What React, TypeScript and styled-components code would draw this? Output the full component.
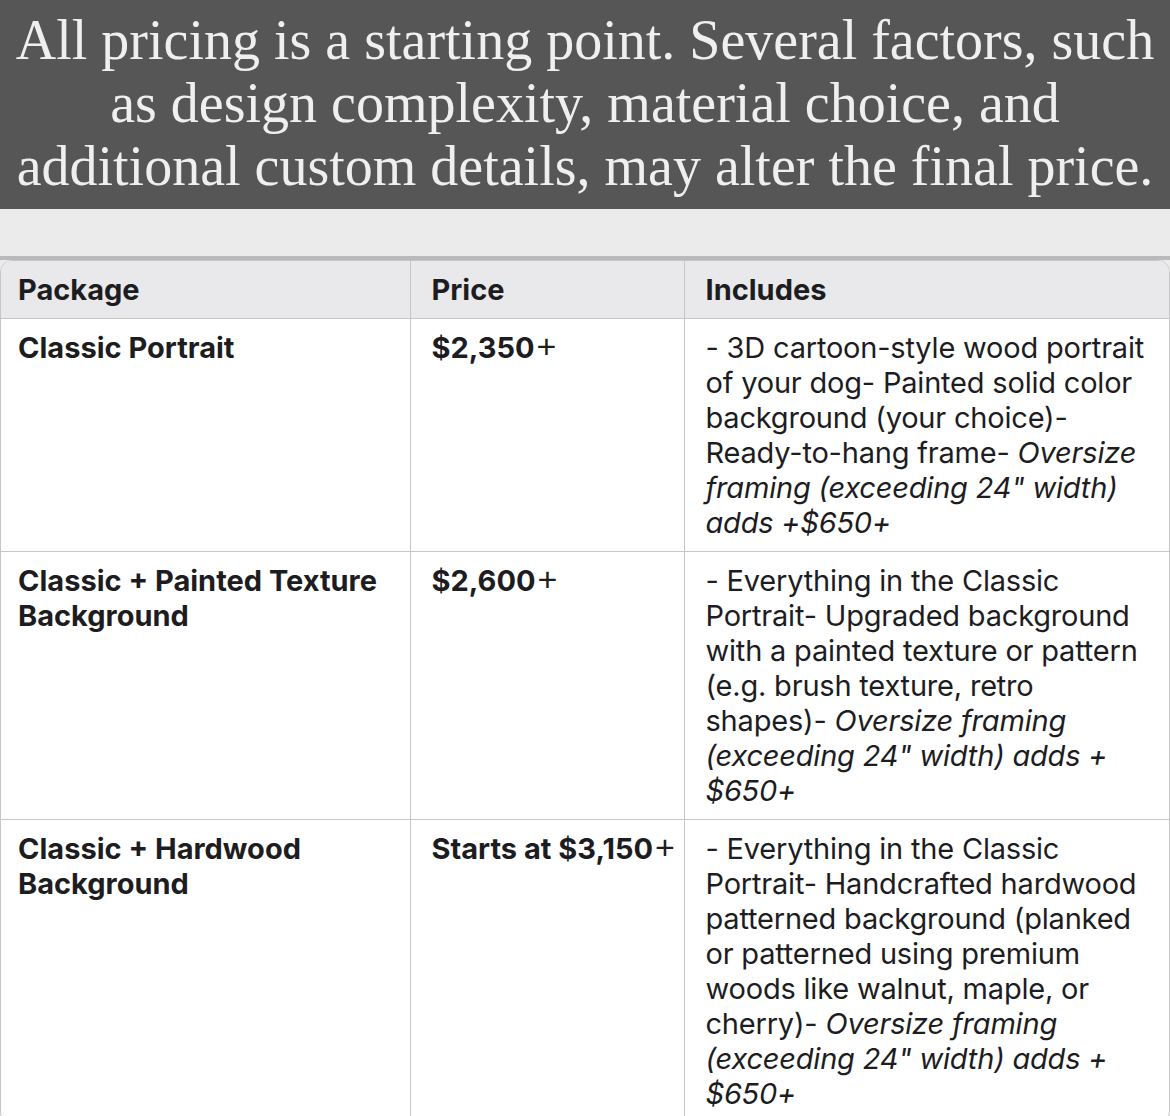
import React from "react";
import styled, { createGlobalStyle } from "styled-components";

const GlobalStyle = createGlobalStyle`
  html, body {
    margin: 0;
    padding: 0;
    overflow: hidden;
    background: #ebebeb;
  }
  * { box-sizing: border-box; }
`;

const Page = styled.div`
  display: flex;
  flex-direction: column;
  width: 1170px;
`;

const Banner = styled.div`
  background: #565656;
  color: #efefef;
  font-family: "Liberation Serif", "Times New Roman", serif;
  font-size: 56px;
  line-height: 63px;
  text-align: center;
  padding: 9px 8px 11px;
`;

const Band = styled.div`
  height: 51px;
  background: #ebebeb;
  border-bottom: 4px solid #b9b9bb;
`;

const TableFrame = styled.div`
  background: #ffffff;
  border: 1px solid #c6c6c8;
  border-radius: 12px;
  overflow: hidden;
`;

const Table = styled.table`
  width: 100%;
  border-collapse: collapse;
  table-layout: fixed;
  font-family: Inter, "Liberation Sans", Arial, sans-serif;
  font-size: 29px;
  line-height: 35px;
  color: #1d1d1f;
`;

const Col = styled.col<{ $w?: number }>`
  width: ${(p) => (p.$w ? `${p.$w}px` : "auto")};
`;

const HeadCell = styled.th`
  background: #e9e9eb;
  text-align: left;
  font-weight: 700;
  padding: 11px 8px 11px 21px;
  border-bottom: 1px solid #c6c6c8;
  border-right: 1px solid #c6c6c8;
  &:first-child { padding-left: 17px; }
  &:last-child { border-right: none; }
`;

const Cell = styled.td<{ $bold?: boolean; $nowrap?: boolean }>`
  vertical-align: top;
  text-align: left;
  padding: 11px 8px 11px 21px;
  font-weight: ${(p) => (p.$bold ? 700 : 400)};
  letter-spacing: ${(p) => (p.$bold ? "0" : "-0.2px")};
  white-space: ${(p) => (p.$nowrap ? "nowrap" : "normal")};
  border-bottom: 1px solid #c6c6c8;
  border-right: 1px solid #c6c6c8;
  &:first-child { padding-left: 17px; }
  &:last-child { border-right: none; }
`;

const Plus = styled.span`
  font-family: "Liberation Sans", Arial, sans-serif;
  font-weight: 400;
  font-size: 34px;
  line-height: 0;
  margin-left: 2px;
`;

const Note = styled.em`
  font-style: italic;
`;

type Row = {
  name: string;
  price: string;
  plain: string;
  italic: React.ReactNode;
};

const rows: Row[] = [
  {
    name: "Classic Portrait",
    price: "$2,350",
    plain:
      "- 3D cartoon-style wood portrait of your dog- Painted solid color background (your choice)- Ready-to-hang frame- ",
    italic: <>Oversize framing (exceeding 24" width) adds +$650+</>,
  },
  {
    name: "Classic + Painted Texture Background",
    price: "$2,600",
    plain:
      "- Everything in the Classic Portrait- Upgraded background with a painted texture or pattern (e.g. brush texture, retro shapes)- ",
    italic: (
      <>
        Oversize framing (exceeding 24" width) adds +<wbr />$650+
      </>
    ),
  },
  {
    name: "Classic + Hardwood Background",
    price: "Starts at $3,150",
    plain:
      "- Everything in the Classic Portrait- Handcrafted hardwood patterned background (planked or patterned using premium woods like walnut, maple, or cherry)- ",
    italic: (
      <>
        Oversize framing (exceeding 24" width) adds +<wbr />$650+
      </>
    ),
  },
];

export default function App() {
  return (
    <Page>
      <GlobalStyle />
      <Banner>
        All pricing is a starting point. Several factors, such as design complexity, material
        choice, and additional custom details, may alter the final price.
      </Banner>
      <Band />
      <TableFrame>
        <Table>
          <colgroup>
            <Col $w={409} />
            <Col $w={274} />
            <Col />
          </colgroup>
          <thead>
            <tr>
              <HeadCell>Package</HeadCell>
              <HeadCell>Price</HeadCell>
              <HeadCell>Includes</HeadCell>
            </tr>
          </thead>
          <tbody>
            {rows.map((r) => (
              <tr key={r.name}>
                <Cell $bold>{r.name}</Cell>
                <Cell $bold $nowrap>
                  {r.price}
                  <Plus>+</Plus>
                </Cell>
                <Cell>
                  {r.plain}
                  <Note>{r.italic}</Note>
                </Cell>
              </tr>
            ))}
          </tbody>
        </Table>
      </TableFrame>
    </Page>
  );
}
